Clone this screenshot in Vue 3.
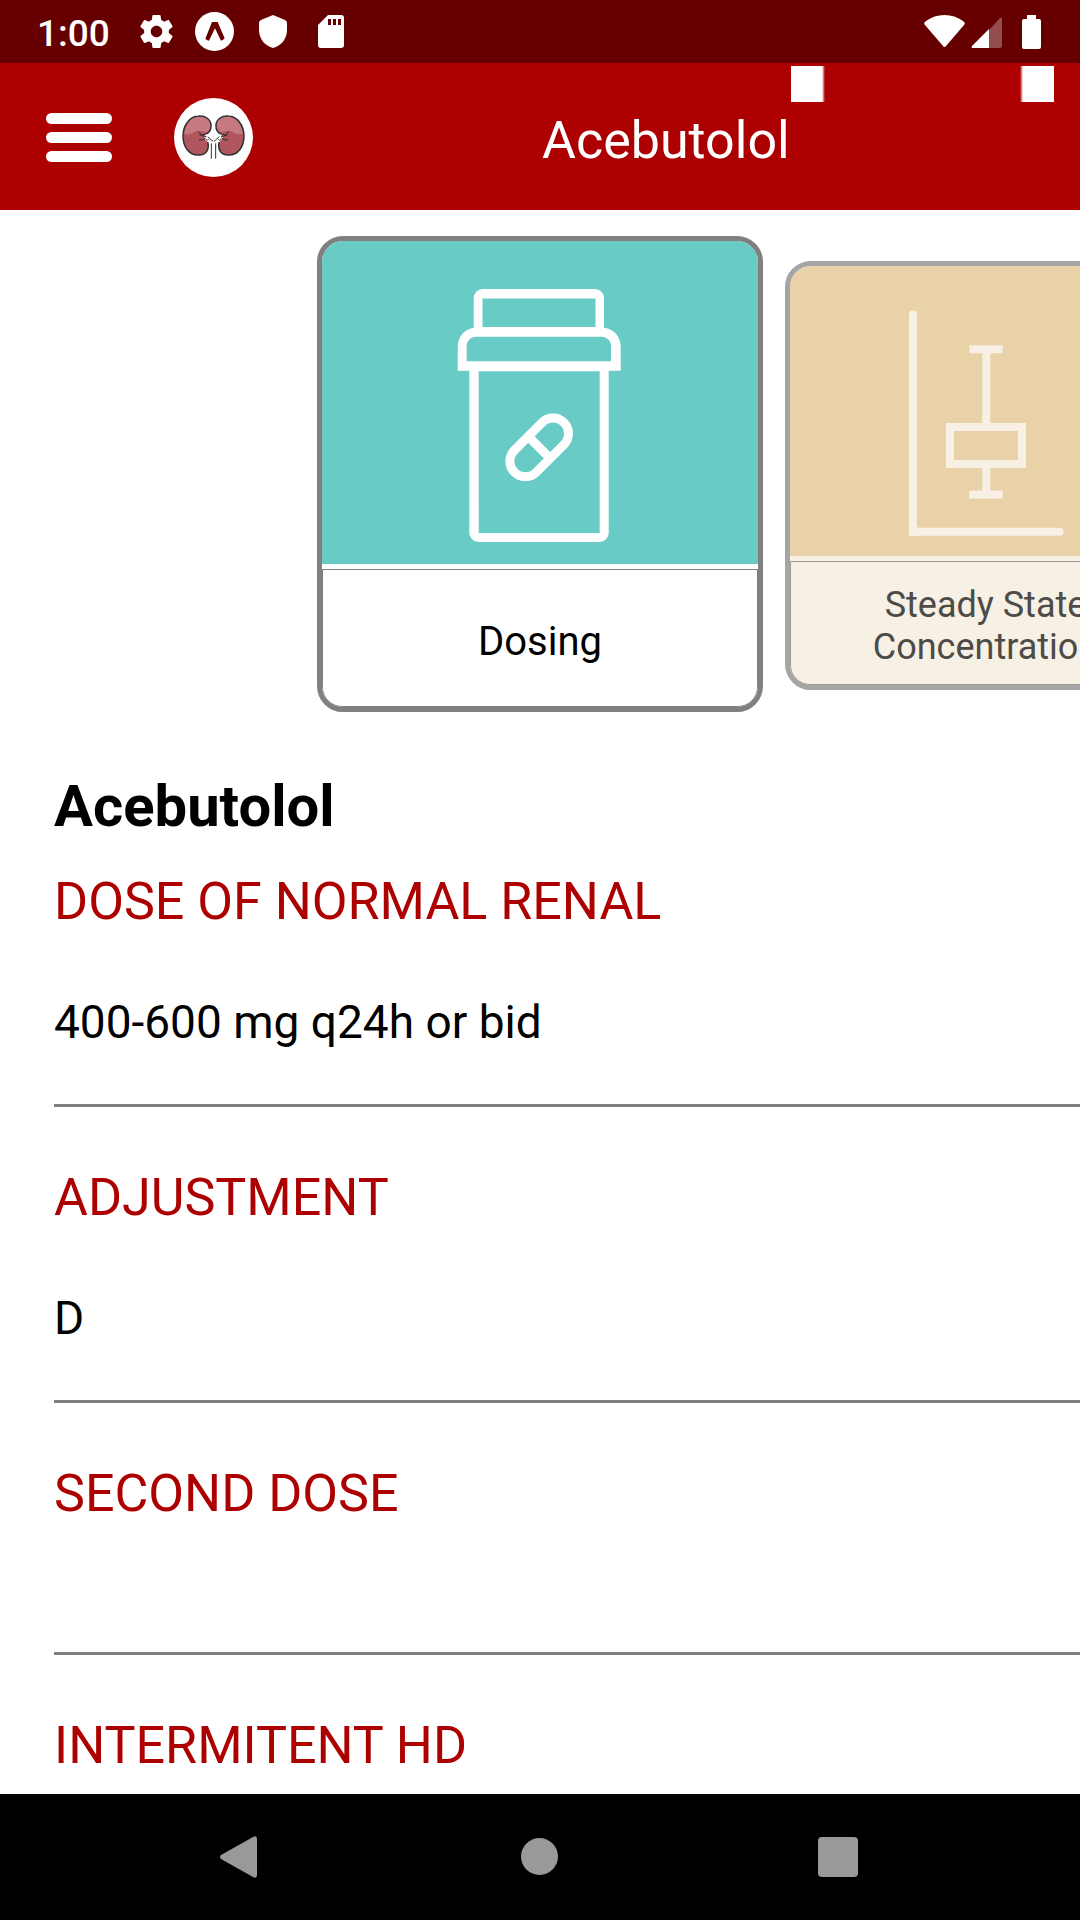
<script setup>
const title = 'Acebutolol'

const sections = [
  { label: 'DOSE OF NORMAL RENAL', value: '400-600 mg q24h or bid' },
  { label: 'ADJUSTMENT', value: 'D' },
  { label: 'SECOND DOSE', value: '' },
  { label: 'INTERMITENT HD', value: '' },
]
</script>

<template>
  <div class="screen">
    <div class="status">
      <div class="status-left">
        <span class="clock">1:00</span>
        <svg class="gear" viewBox="2 2 20 20" width="33" height="33" aria-hidden="true">
          <path fill="#fff" d="M19.43 12.98c.04-.32.07-.64.07-.98s-.03-.66-.07-.98l2.11-1.65c.19-.15.24-.42.12-.64l-2-3.46c-.12-.22-.39-.3-.61-.22l-2.49 1c-.52-.4-1.08-.73-1.69-.98l-.38-2.65C14.46 2.18 14.25 2 14 2h-4c-.25 0-.46.18-.49.42l-.38 2.65c-.61.25-1.17.59-1.69.98l-2.49-1c-.23-.09-.49 0-.61.22l-2 3.46c-.13.22-.07.49.12.64l2.11 1.65c-.04.32-.07.65-.07.98s.03.66.07.98l-2.11 1.65c-.19.15-.24.42-.12.64l2 3.46c.12.22.39.3.61.22l2.49-1c.52.4 1.08.73 1.69.98l.38 2.65c.03.24.24.42.49.42h4c.25 0 .46-.18.49-.42l.38-2.65c.61-.25 1.17-.59 1.69-.98l2.49 1c.23.09.49 0 .61-.22l2-3.46c.12-.22.07-.49-.12-.64l-2.11-1.65zM12 15.500c-1.930 0-3.500-1.570-3.500-3.500s1.570-3.500 3.500-3.500 3.500 1.570 3.500 3.500-1.570 3.500-3.500 3.500z" />
        </svg>
        <svg class="expo" viewBox="0 0 117 117" width="39" height="39" aria-hidden="true">
          <circle cx="58.500" cy="58.500" r="58.500" fill="#fff" />
          <path fill="#600" d="M51 30H68L89 79Q85 85 78 86L60 49 42 86Q35 85 31 80z" />
        </svg>
        <svg class="shield" viewBox="0 0 28 33" width="28" height="33" aria-hidden="true">
          <path fill="#fff" d="M14 0 26 5q2 1 2 3v7c0 9-6 16-14 18C6 31 0 24 0 15V8q0-2 2-3z" />
        </svg>
        <svg class="sd" viewBox="0 0 26 33" width="26" height="33" aria-hidden="true">
          <path fill="#fff" fill-rule="evenodd" d="M10 0H23a3 3 0 0 1 3 3V30a3 3 0 0 1-3 3H3a3 3 0 0 1-3-3V10zM10 4V10H13V4zM15 4V10H18V4zM20 4V10H23V4z" />
        </svg>
      </div>
      <div class="status-right">
        <svg viewBox="0 0 41 34" width="41" height="34" aria-hidden="true">
          <path fill="#fff" d="M1 10Q-1 8 2 6 10 0 20.500 0T39 6Q42 8 40 10L22 31q-1.500 2-3 0z" />
        </svg>
        <svg class="signal" viewBox="0 0 31 34" width="31" height="34" aria-hidden="true">
          <path fill="#944d4d" d="M18 15 29 3q2-1 2 1V31q0 2-2 2H18z" />
          <path fill="#fff" d="M18 14V33H1q-1-1 0-2z" />
        </svg>
        <svg class="battery" viewBox="0 0 19 34" width="19" height="34" aria-hidden="true">
          <path fill="#fff" d="M5 0H14V4H17a2 2 0 0 1 2 2V32a2 2 0 0 1-2 2H2a2 2 0 0 1-2-2V6a2 2 0 0 1 2-2H5z" />
        </svg>
      </div>
    </div>

    <header class="bar">
      <div class="bar-left">
        <button class="menu" type="button" aria-label="Menu">
          <span></span><span></span><span></span>
        </button>
        <svg class="logo" viewBox="27 24 237 237" width="79" height="79" aria-hidden="true">
          <defs>
            <g id="kidney">
              <path fill="#b1555f" d="M100 78C120 76 139 88 138 108C138 120 133 128 124 132C116 140 119 150 128 156C134 178 124 196 100 195C72 195 53 170 54 136C55 105 75 79 100 78z" />
              <path fill="#c77982" d="M100 78C120 76 139 88 138 108C137 117 130 125 120 127C108 122 96 121 87 126C78 134 66 136 58 130C61 101 78 79 100 78z" />
              <path fill="none" stroke="#2f3031" stroke-width="4.500" d="M124 132C133 128 138 120 138 108C139 88 120 76 100 78C75 79 55 105 54 136C53 170 72 195 100 195C124 196 134 178 128 156" />
              <path fill="#fff" d="M118 141 136 129H146V160H139L130 151 120 147z" />
              <path fill="none" stroke="#2f3031" stroke-width="3" d="M99 124l10 10h8l8-4M103 134l14 5M102 150l12-1 8-5M117 138l7 3M122 148l5 3 4-4M128 140l16 14M139 160V206" />
            </g>
          </defs>
          <circle cx="145.500" cy="142.500" r="118.500" fill="#fff" />
          <use href="#kidney" />
          <use href="#kidney" transform="translate(291 0) scale(-1 1)" />
        </svg>
      </div>
      <h1 class="bar-title">{{ title }}</h1>
      <div class="marks" aria-hidden="true">
        <i class="mark mark-start"></i>
        <i class="mark mark-end"></i>
      </div>
    </header>

    <main class="content">
      <div class="carousel">
        <button class="card card-active" type="button">
          <span class="card-art">
            <svg viewBox="0 0 436 323" width="436" height="323" aria-hidden="true">
              <g fill="#fff" fill-rule="evenodd">
                <path d="M151.700 89V57a9 9 0 0 1 9-9H273a9 9 0 0 1 9 9V89zM160.500 57.500V86H273.500V57.500z" />
                <path d="M135.700 129.700V106a18 19 0 0 1 18-19.300H280.700a18 19 0 0 1 18 19.300V129.700zM144.700 120.300H289V105a9 9.300 0 0 0-9-9.300H153.700a9 9.300 0 0 0-9 9.300z" />
                <path d="M147.300 128V292a9 9 0 0 0 9 9H277.700a9 9 0 0 0 9-9V128zM156.700 130.300H277.700V292H156.700z" />
              </g>
              <g fill="none" stroke="#fff" stroke-width="9" transform="rotate(-45 217.200 206.400)">
                <rect x="182.200" y="190.900" width="70" height="31" rx="15.500" />
                <path d="M217.200 191V222" />
              </g>
            </svg>
          </span>
          <span class="card-label">Dosing</span>
        </button>
        <button class="card card-next" type="button">
          <span class="card-art">
            <svg viewBox="0 0 391 290" width="391" height="290" aria-hidden="true">
              <g fill="none" stroke="#f8f0e4" stroke-width="8">
                <path stroke-linecap="round" d="M123 48.500V265.700H269.700" />
                <path d="M119 265.700H130" />
                <path d="M179.300 83.300H212.700M196.300 83V161M196.300 198V228M179.300 228.500H212.700" />
                <rect x="160" y="161" width="72" height="37" />
              </g>
            </svg>
          </span>
          <span class="card-label">Steady State Concentration</span>
        </button>
      </div>

      <article class="detail">
        <h2 class="drug">{{ title }}</h2>
        <section v-for="s in sections" :key="s.label" class="entry">
          <h3 class="entry-label">{{ s.label }}</h3>
          <p class="entry-value">{{ s.value }}</p>
        </section>
      </article>
    </main>

    <nav class="nav">
      <button type="button" aria-label="Back">
        <svg viewBox="0 0 40 42" width="40" height="42" aria-hidden="true">
          <path fill="#999" d="M1 19 33 1q4-2 4 2V39q0 4-4 2L1 23q-2-2 0-4z" />
        </svg>
      </button>
      <button type="button" aria-label="Home">
        <svg viewBox="0 0 38 38" width="38" height="38" aria-hidden="true">
          <circle cx="18.500" cy="18.500" r="18.500" fill="#999" />
        </svg>
      </button>
      <button type="button" aria-label="Overview">
        <svg viewBox="0 0 44 40" width="44" height="40" aria-hidden="true">
          <rect width="40" height="40" rx="4" fill="#999" />
        </svg>
      </button>
    </nav>
  </div>
</template>

<style>
body {
  margin: 0;
}
</style>

<style scoped>
.screen {
  display: flex;
  flex-direction: column;
  height: 100vh;
  overflow: hidden;
  background: #fff;
  color: #000;
  font-family: Roboto, "Liberation Sans", sans-serif;
}
button {
  padding: 0;
  border: 0;
  background: none;
  color: inherit;
  font: inherit;
}
h1, h2, h3, p {
  margin: 0;
  font-weight: 400;
}
svg {
  display: block;
  flex: none;
}

.status {
  display: flex;
  flex: none;
  justify-content: space-between;
  align-items: center;
  height: 63px;
  padding: 0 39px 0 37px;
  background: #600;
}
.status-left,
.status-right {
  display: flex;
  align-items: center;
}
.clock {
  width: 103px;
  padding-top: 4px;
  color: #fff;
  font-size: 37px;
  font-weight: 500;
  line-height: 44px;
}
.expo {
  margin-left: 22px;
}
.shield {
  margin-left: 25px;
}
.sd {
  margin-left: 31px;
}
.signal {
  margin-left: 6px;
}
.battery {
  margin-left: 20px;
}

.bar {
  position: relative;
  display: grid;
  flex: none;
  box-sizing: border-box;
  grid-template-columns: 1fr 1fr;
  align-items: center;
  height: 147px;
  padding-top: 2px;
  background: #ad0000;
}
.bar-left {
  display: flex;
  align-items: center;
  gap: 62px;
  padding-left: 46px;
}
.menu {
  display: flex;
  flex-direction: column;
  gap: 8px;
  width: 66px;
}
.menu span {
  height: 11px;
  border-radius: 6px;
  background: #fff;
}
.bar-title {
  padding: 6px 0 0 2px;
  color: #fff;
  font-size: 52px;
  line-height: 62px;
}
.marks {
  position: absolute;
  top: 3px;
  right: 26px;
  display: flex;
  justify-content: space-between;
  width: 263px;
}
.mark {
  width: 34px;
  height: 36px;
}
.mark-start {
  background: linear-gradient(to right, #fff 31px, #ad0000);
}
.mark-end {
  background: linear-gradient(to left, #fff 31px, #ad0000);
}

.content {
  flex: 1;
  min-height: 0;
  overflow: hidden;
}
.carousel {
  display: flex;
  align-items: flex-end;
  gap: 22px;
  padding: 26px 0 0 calc(50% - 223px);
  overflow: hidden;
}
.card {
  display: flex;
  flex: none;
  flex-direction: column;
  box-sizing: border-box;
  border: 5px solid #808080;
  border-radius: 26px;
  overflow: hidden;
}
.card-active {
  width: 446px;
  height: 476px;
  font-size: 40px;
  line-height: 46px;
}
.card-next {
  width: 401px;
  height: 429px;
  margin-bottom: 22px;
  border-color: #a5a5a5;
  background: #f7f0e4;
  color: #4d4b47;
  font-size: 36px;
  line-height: 42px;
}
.card-art {
  border-bottom: 5px solid #fff;
  background: #68cbc5;
}
.card-next .card-art {
  border-color: #f7f0e4;
  background: #e9d2a8;
}
.card-label {
  display: flex;
  flex: 1;
  align-items: center;
  justify-content: center;
  align-self: stretch;
  padding-top: 8px;
  border: 1px solid #808080;
  border-radius: 0 0 20px 20px;
  text-align: center;
}
.card-next .card-label {
  padding-top: 6px;
  border-color: #9d9a94;
}

.detail {
  padding: 60px 0 0 54px;
}
.drug {
  margin-bottom: 31px;
  font-size: 58px;
  font-weight: 700;
  line-height: 68px;
}
.entry {
  padding-bottom: 55px;
  border-bottom: 3px solid #808080;
}
.entry + .entry {
  padding-top: 60px;
}
.entry-label {
  margin-bottom: 62px;
  color: #ad0000;
  font-size: 52px;
  line-height: 62px;
}
.entry-value {
  min-height: 10px;
  font-size: 46px;
  line-height: 54px;
}

.nav {
  display: flex;
  flex: none;
  justify-content: center;
  height: 126px;
  background: #000;
}
.nav button {
  display: flex;
  align-items: center;
  justify-content: center;
  width: 300px;
}
</style>
